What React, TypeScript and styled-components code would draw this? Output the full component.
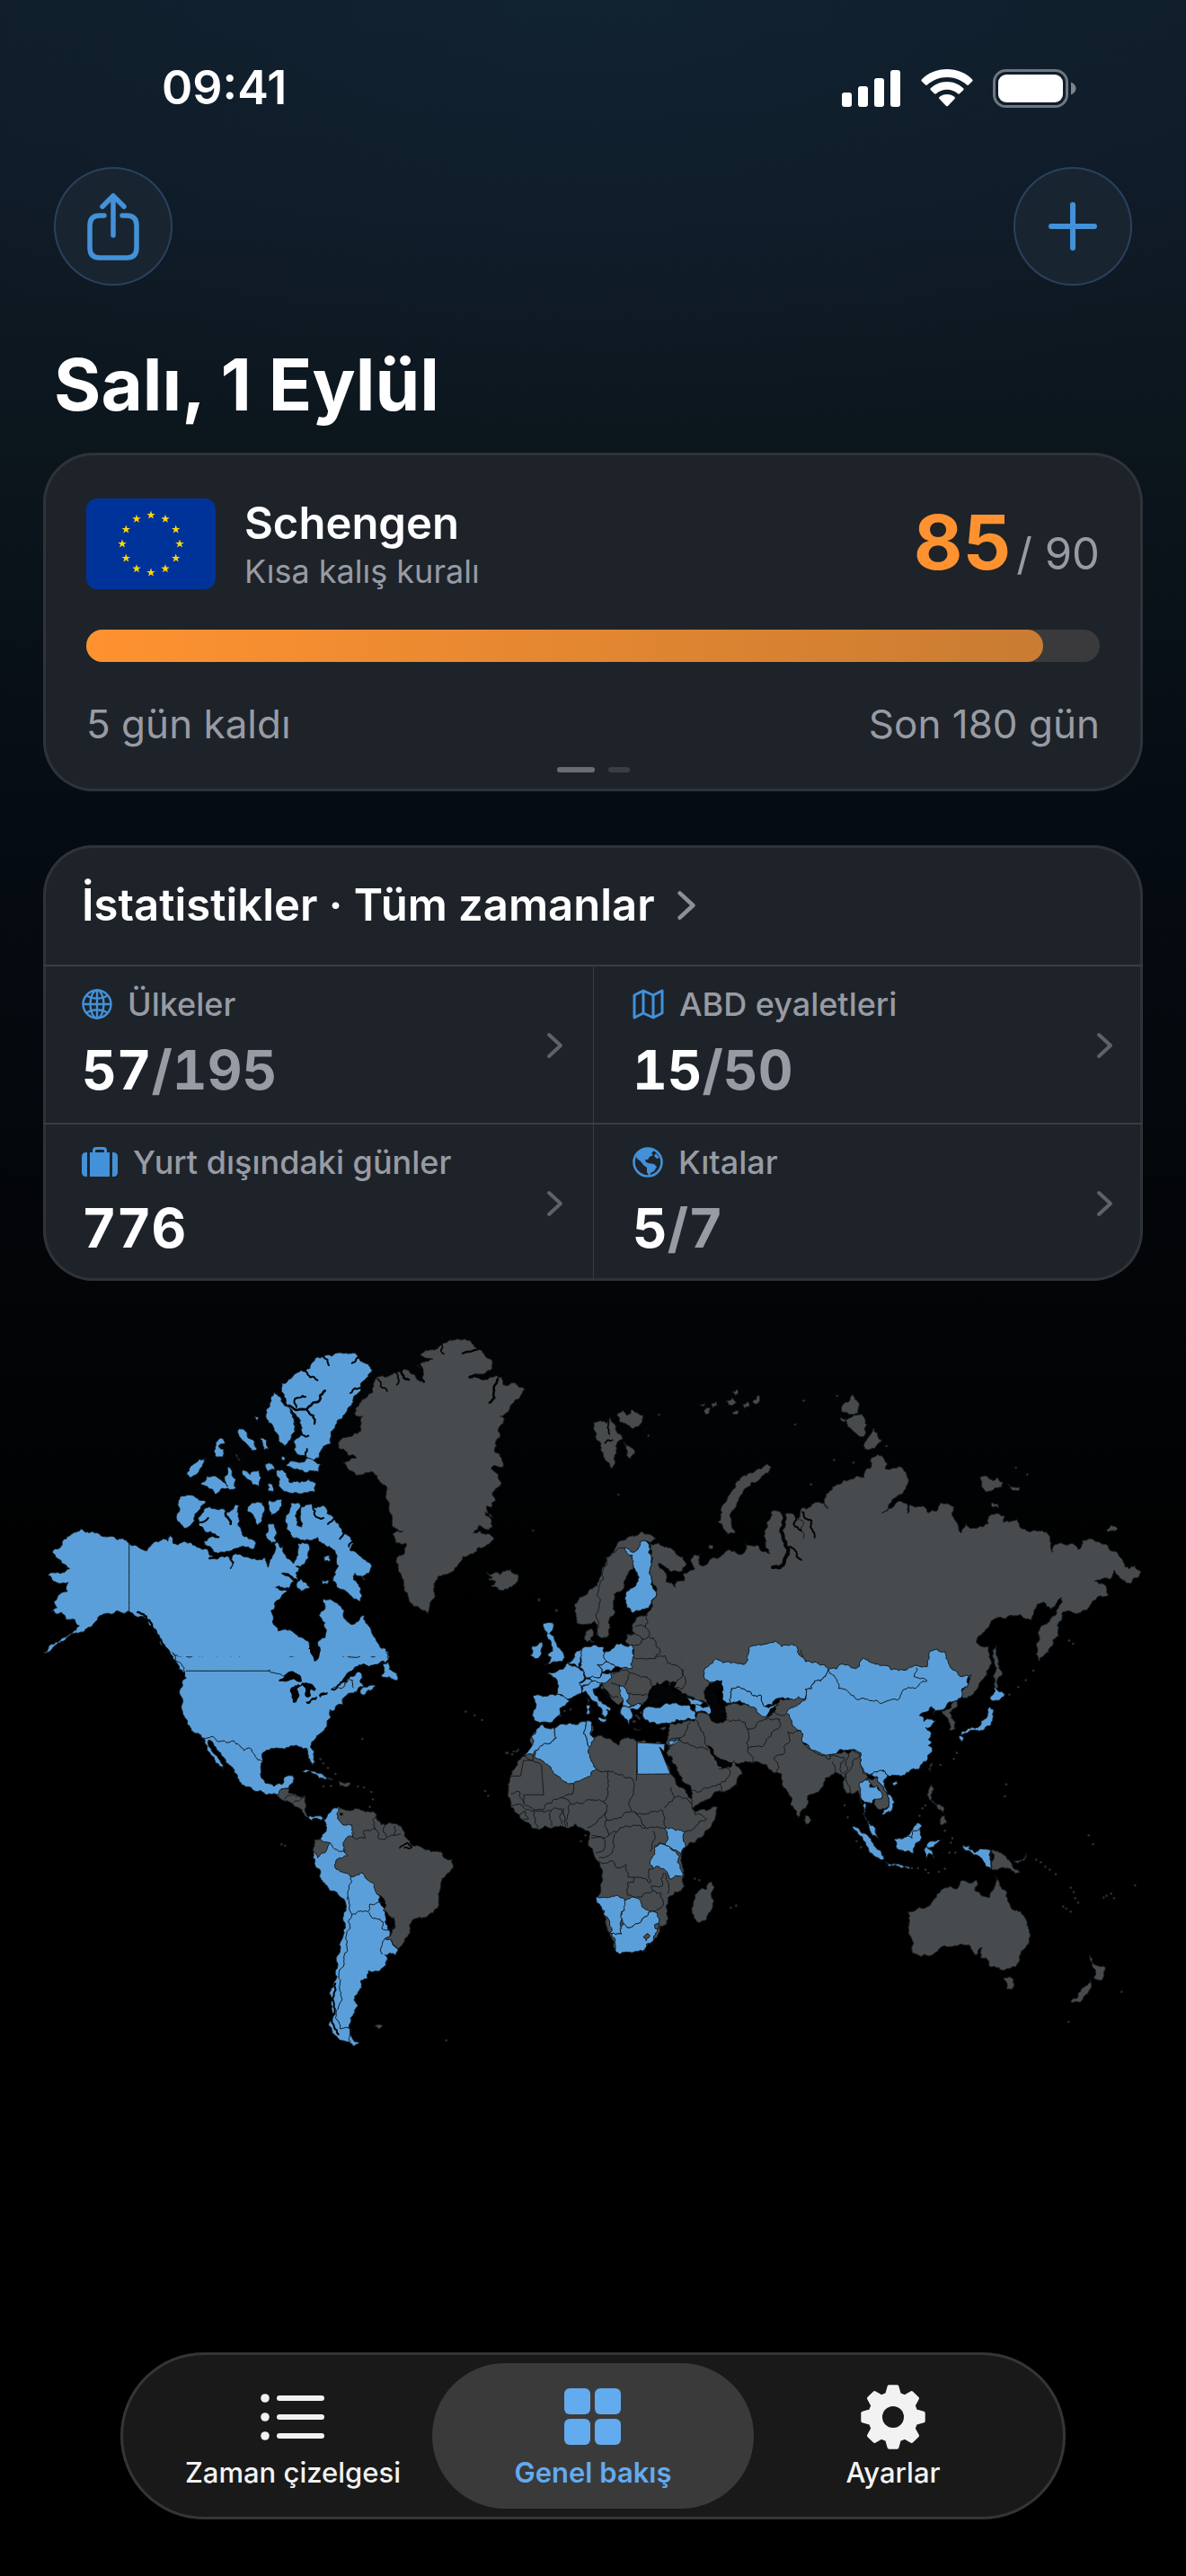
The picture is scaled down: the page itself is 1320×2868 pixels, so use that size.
import React from "react";
import styled, { createGlobalStyle } from "styled-components";

const Global = createGlobalStyle`
  * { box-sizing: border-box; }
  body { margin: 0; background: #000; }
  button { font: inherit; border: 0; padding: 0; background: none; color: inherit; cursor: pointer; }
`;

const accent = "#4391d8";
const muted = "#989ba3";

const Screen = styled.div`
  min-height: 100vh;
  display: flex;
  flex-direction: column;
  font-family: Inter, "Noto Sans", sans-serif;
  color: #fff;
  background:
    radial-gradient(ellipse 900px 500px at 50% 0, rgba(20, 44, 62, 0.35), rgba(20, 44, 62, 0)),
    linear-gradient(180deg, #101d2a 0, #0f1a26 230px, #0c161d 480px, #060c14 900px, #04070a 1300px, #000 1800px);
`;

const StatusBar = styled.div`
  display: flex;
  align-items: center;
  justify-content: space-between;
  padding: 66px 120px 0 180px;
  height: 130px;
`;
const Clock = styled.time`
  font-size: 52px;
  line-height: 64px;
  font-weight: 600;
`;
const StatusIcons = styled.div`
  display: flex;
  align-items: center;
  gap: 22px;
`;

const Toolbar = styled.header`
  display: flex;
  justify-content: space-between;
  padding: 56px 60px 0;
`;
const RoundButton = styled.button`
  width: 132px;
  height: 132px;
  border-radius: 50%;
  display: grid;
  place-items: center;
  background: #182531;
  box-shadow: inset 0 0 0 2px #29415d;
`;

const Main = styled.main`
  padding: 0 48px;
`;
const Title = styled.h1`
  margin: 62px 12px 28px;
  font-size: 80px;
  line-height: 96px;
  font-weight: 700;
`;
const Card = styled.section`
  border-radius: 56px;
  background: #1e232a;
  box-shadow: inset 0 0 0 3px #2f3338;
`;
const RuleCard = styled(Card)`
  padding: 51px 48px 21px;
`;
const RuleHead = styled.div`
  display: flex;
  align-items: flex-start;
  height: 101px;
`;
const Flag = styled.svg`
  width: 144px;
  height: 101px;
  border-radius: 12px;
  display: block;
`;
const RuleText = styled.div`
  flex: 1;
  padding-left: 32px;
`;
const RuleName = styled.h2`
  margin: 0 0 3px;
  font-size: 49px;
  line-height: 56px;
  font-weight: 600;
`;
const RuleNote = styled.p`
  margin: 0;
  font-size: 36px;
  line-height: 44px;
  color: ${muted};
`;
const Count = styled.p`
  margin: 0;
  display: flex;
  align-items: baseline;
  gap: 6px;
  font-size: 49px;
  line-height: 98px;
  color: ${muted};
`;
const CountNow = styled.strong`
  font-size: 84px;
  font-weight: 700;
  color: #ff9230;
`;
const Track = styled.div`
  margin-top: 45px;
  height: 36px;
  border-radius: 18px;
  background: #3a3a3c;
`;
const Fill = styled.div`
  height: 100%;
  border-radius: 18px;
  background: linear-gradient(90deg, #ff9230, #c97c32);
`;
const RuleFoot = styled.div`
  margin-top: 43px;
  display: flex;
  justify-content: space-between;
  font-size: 44px;
  line-height: 52px;
  color: ${muted};
`;
const Pager = styled.div`
  margin-top: 22px;
  display: flex;
  justify-content: center;
  gap: 15px;
`;
const PagerDot = styled.span<{ $on?: boolean }>`
  width: ${(p) => (p.$on ? 42 : 24)}px;
  height: 6px;
  border-radius: 3px;
  background: ${(p) => (p.$on ? "#6a6e73" : "#3a3e42")};
`;

const StatsCard = styled(Card)`
  margin-top: 60px;
  overflow: hidden;
`;
const StatsHead = styled.button`
  width: 100%;
  height: 133px;
  padding: 0 43px;
  display: flex;
  align-items: center;
  gap: 24px;
  font-size: 49px;
  line-height: 60px;
  font-weight: 600;
`;
const StatsGrid = styled.div`
  display: grid;
  grid-template-columns: 1fr 1fr;
`;
const Stat = styled.button`
  height: 176px;
  padding: 20px 33px 0 43px;
  display: flex;
  justify-content: space-between;
  text-align: left;
  border-top: 2px solid #393d42;
  &:nth-child(even) { border-left: 1px solid #393d42; }
`;
const StatBody = styled.span`
  display: flex;
  flex-direction: column;
  gap: 19px;
`;
const StatLabel = styled.span`
  display: flex;
  align-items: center;
  gap: 17px;
  font-size: 36px;
  line-height: 44px;
  font-weight: 500;
  color: ${muted};
`;
const StatValue = styled.span`
  font-size: 60px;
  line-height: 64px;
  font-weight: 700;
  font-variant-numeric: tabular-nums;
`;
const StatTotal = styled.span`
  color: ${muted};
`;
const StatArrow = styled.span`
  display: flex;
  align-items: center;
  padding-bottom: 18px;
`;

const MapFigure = styled.figure`
  margin: 44px 0 0;
`;
const MapSvg = styled.svg`
  display: block;
  width: 100%;
`;

const TabBar = styled.nav`
  margin: auto 134px 63px;
  height: 186px;
  padding: 12px 25px;
  display: flex;
  border-radius: 93px;
  background: #191919;
  box-shadow: inset 0 0 0 3px #353535;
`;
const Tab = styled.button<{ $on?: boolean }>`
  flex: 1;
  margin: 0 ${(p) => (p.$on ? -12 : 0)}px;
  padding: 24px ${(p) => (p.$on ? 12 : 0)}px 0;
  border-radius: 81px;
  display: flex;
  flex-direction: column;
  align-items: center;
  gap: 8px;
  font-size: 31px;
  line-height: 36px;
  font-weight: ${(p) => (p.$on ? 600 : 500)};
  color: ${(p) => (p.$on ? "#62abee" : "#f2f2f2")};
  background: ${(p) => (p.$on ? "#3a3a3a" : "transparent")};
`;

/* ---------- icons ---------- */

const Signal = () => (
  <svg width="66" height="42" viewBox="0 0 66 42" fill="#fff">
    <rect x="0" y="26" width="11" height="16" rx="3" />
    <rect x="18" y="19" width="11" height="23" rx="3" />
    <rect x="36" y="10" width="11" height="32" rx="3" />
    <rect x="54" y="1" width="11" height="41" rx="3" />
  </svg>
);
const Wifi = () => (
  <svg width="58" height="42" viewBox="0 0 58 42" fill="#fff">
    <path d="M29 0C40 0 50 4 57.200 11.500Q58 12.500 57.200 13.400L53 17.600Q52 18.400 51 17.600C45 12 37.500 9 29 9S13 12 7 17.600Q6 18.400 5 17.600L.8 13.400Q0 12.500 .8 11.500C8 4 18 0 29 0Z" />
    <path d="M29 14C36 14 42.500 16.800 47.200 21.200Q48.200 22.200 47.200 23.200L43 27.300Q42 28.200 41 27.300C37.700 24.500 33.500 22.800 29 22.800S20.300 24.500 17 27.300Q16 28.200 15 27.300L10.800 23.200Q9.800 22.200 10.800 21.200C15.500 16.800 22 14 29 14Z" />
    <path d="M29 28C32.200 28 35.200 29.200 37.500 31.100Q38.500 32 37.600 33L30.200 40.700Q29 41.800 27.800 40.700L20.400 33Q19.500 32 20.500 31.100C22.800 29.200 25.800 28 29 28Z" />
  </svg>
);
const Battery = () => (
  <svg width="95" height="43" viewBox="0 0 95 43">
    <rect x="1.500" y="1.500" width="81" height="40" rx="13" fill="none" stroke="#6f777e" strokeWidth="3" />
    <rect x="6" y="6" width="72" height="31" rx="9" fill="#fff" />
    <path d="M87 14.500C90.500 16 92.500 18.500 92.500 21.500S90.500 27 87 28.500Z" fill="#7c848a" />
  </svg>
);
const Share = () => (
  <svg width="60" height="76" viewBox="0 0 60 76" fill="none" stroke={accent} strokeWidth="5.500" strokeLinecap="round" strokeLinejoin="round">
    <path d="M20 26H15Q4 26 4 37V62Q4 73 15 73H45Q56 73 56 62V37Q56 26 45 26H40" />
    <path d="M30 48V5M18 16L30 4L42 16" />
  </svg>
);
const Plus = () => (
  <svg width="56" height="56" viewBox="0 0 56 56" fill="none" stroke={accent} strokeWidth="6" strokeLinecap="round">
    <path d="M28 4V52M4 28H52" />
  </svg>
);
const Chevron = ({ big }: { big?: boolean }) => (
  <svg width={big ? 22 : 19} height={big ? 34 : 30} viewBox="0 0 19 30" fill="none" stroke={big ? "#8d9096" : "#5f6268"} strokeWidth="4" strokeLinecap="round" strokeLinejoin="round">
    <path d="M3 3L16 15L3 27" />
  </svg>
);
const GlobeIcon = () => (
  <svg width="34" height="34" viewBox="0 0 34 34" fill="none" stroke={accent} strokeWidth="2.400">
    <circle cx="17" cy="17" r="15.500" />
    <ellipse cx="17" cy="17" rx="7.500" ry="15.500" />
    <path d="M17 1.500V32.500M1.500 17H32.500M5 7.500Q17 14 29 7.500M5 26.500Q17 20 29 26.500" />
  </svg>
);
const MapIcon = () => (
  <svg width="35" height="34" viewBox="0 0 35 34" fill="none" stroke={accent} strokeWidth="3" strokeLinejoin="round">
    <path d="M2 7L12 2L23 7L33 2V27L23 32L12 27L2 32ZM12 2V27M23 7V32" />
  </svg>
);
const SuitcaseIcon = () => (
  <svg width="40" height="34" viewBox="0 0 40 34" fill={accent}>
    <path d="M6 6V33H5Q0 33 0 28V11Q0 6 5 6ZM34 6V33H35Q40 33 40 28V11Q40 6 35 6Z" />
    <path d="M9 6H12V4Q12 0 16 0H24Q28 0 28 4V6H31V33H9ZM15 6H25V4.500Q25 3 23.500 3H16.500Q15 3 15 4.500Z" />
  </svg>
);
const AmericasIcon = () => (
  <svg width="34" height="34" viewBox="0 0 34 34">
    <circle cx="17" cy="17" r="15.500" fill="none" stroke={accent} strokeWidth="2.600" />
    <path fill={accent} d="M4 10C7 4 13 1 19 2L24 4L21 7L23 9L19 11L17 14L14 14L15 17L18 18L24 19L27 22L24 27L20 29L19 33L16 28L16 23L12 20L9 16L5 13Z" />
    <path fill={accent} d="M26 7L30 12L27 13L24 10Z" />
  </svg>
);
const ListIcon = () => (
  <svg width="72" height="72" viewBox="0 0 72 72" fill="#f2f2f2">
    {[15, 36, 57].map((y) => (
      <g key={y}>
        <circle cx="5" cy={y} r="4.800" />
        <rect x="18" y={y - 3} width="53" height="6" rx="3" />
      </g>
    ))}
  </svg>
);
const GridIcon = () => (
  <svg width="72" height="72" viewBox="0 0 72 72" fill="#62abee">
    {[4, 38].map((y) => [4, 38].map((x) => <rect key={`${x}-${y}`} x={x} y={y} width="29" height="29" rx="6" />))}
  </svg>
);
const gearPath = (() => {
  const pts: string[] = [];
  for (let i = 0; i < 8; i++) {
    const base = (i * Math.PI) / 4;
    const steps: [number, number][] = [[-0.27, 26], [-0.13, 34], [0.13, 34], [0.27, 26]];
    for (const [da, r] of steps) {
      pts.push(`${(36 + r * Math.sin(base + da)).toFixed(2)},${(36 - r * Math.cos(base + da)).toFixed(2)}`);
    }
  }
  return `M${pts.join("L")}Z`;
})();
const GearIcon = () => (
  <svg width="72" height="72" viewBox="0 0 72 72">
    <path d={gearPath} fill="#f2f2f2" stroke="#f2f2f2" strokeWidth="4" strokeLinejoin="round" />
    <circle cx="36" cy="36" r="12" fill="#191919" />
  </svg>
);

const EuFlag = () => {
  const star = (cx: number, cy: number) =>
    Array.from({ length: 10 }, (_, i) => {
      const r = i % 2 ? 2 : 5;
      const a = (i * Math.PI) / 5;
      return `${cx + r * Math.sin(a)},${cy - r * Math.cos(a)}`;
    }).join(" ");
  return (
    <Flag viewBox="0 0 144 101" role="img" aria-label="AB">
      <rect width="144" height="101" fill="#003399" />
      {Array.from({ length: 12 }, (_, i) => {
        const a = (i * Math.PI) / 6;
        return <polygon key={i} fill="#ffd60a" points={star(72 + 32 * Math.sin(a), 50.500 - 32 * Math.cos(a))} />;
      })}
    </Flag>
  );
};

/* ---------- world map ---------- */

type Sheet = keyof typeof sheets;
type Pt = [number, number];

// Each sheet is a survey tile: its origin on the map, drawn at three times scale.
const sheets = {
  arctic: [40, 1470],
  greenland: [360, 1470],
  eurasia: [560, 1680],
  siberia: [860, 1520],
  americas: [160, 1840],
  africa: [540, 1880],
  pacific: [880, 1880],
  barents: [740, 1520],
} as const;

const parse = (sheet: Sheet, s: string): Pt[] =>
  s.trim().split(/\s+/).map((p) => {
    const [x, y] = p.split(",").map(Number);
    return [sheets[sheet][0] + x / 3, sheets[sheet][1] + y / 3] as Pt;
  });

const noise = (a: Pt, b: Pt) => {
  const v = Math.sin(a[0] * 12.9898 + a[1] * 78.233 + b[0] * 37.719 + b[1] * 11.131) * 43758.5453;
  return (v - Math.floor(v)) * 2 - 1;
};

// Midpoint displacement; neighbours that share an edge get the same crinkles.
const crinkle = (a: Pt, b: Pt, k: number): Pt[] => {
  const len = Math.hypot(b[0] - a[0], b[1] - a[1]);
  if (len < 3) return [b];
  const [p, q] = a[0] < b[0] || (a[0] === b[0] && a[1] < b[1]) ? [a, b] : [b, a];
  const n = noise(p, q) * k * Math.min(len, 14);
  const m: Pt = [
    (p[0] + q[0]) / 2 + ((p[1] - q[1]) / len) * n,
    (p[1] + q[1]) / 2 + ((q[0] - p[0]) / len) * n,
  ];
  return [...crinkle(a, m, k), ...crinkle(m, b, k)];
};

const toPath = (pts: Pt[], close: boolean, k: number) => {
  const out: Pt[] = [pts[0]];
  for (let i = 1; i < pts.length; i++) out.push(...crinkle(pts[i - 1], pts[i], k));
  if (close) out.push(...crinkle(pts[pts.length - 1], pts[0], k));
  return `M${out.map((p) => `${p[0].toFixed(1)},${p[1].toFixed(1)}`).join("L")}${close ? "Z" : ""}`;
};

const visited = "#5a9fda";
const unvisited = "#484b4d";
const sea = "#020405";
const edge = "#141a1e";

type Shape = [Sheet, string, string];

const lands: Shape[] = [
  // Canada and Alaska
  ["arctic", visited, "152,697 165,708 190,705 215,718 245,722 270,733 290,728 312,745 335,752 355,765 370,770 385,750 410,740 425,728 440,738 447,718 458,745 475,750 490,740 515,742 535,755 555,765 575,768 580,785 600,797 620,788 640,788 650,830 655,788 680,780 700,790 730,795 755,800 765,792 775,825 780,800 797,775 795,745 805,740 818,760 825,755 835,785 850,800 860,812 870,790 875,745 905,745 915,765 910,795 895,815 868,822 880,830 868,845 875,868 860,862 850,852 820,845 850,860 862,872 845,895 800,892 840,902 825,915 800,940 785,970 790,1005 800,1020 808,1037 840,1035 870,1050 900,1068 912,1075 915,1110 930,1140 945,1130 948,1100 940,1078 965,1060 970,1035 965,1010 945,985 958,970 960,930 990,935 1010,950 1030,970 1035,1000 1060,1015 1080,1000 1095,985 1110,1020 1125,1050 1140,1075 1165,1095 1178,1110 1180,1125 1150,1140 980,1170 500,1180 470,1145 450,1115 430,1090 410,1050 395,1030 375,1000 345,990 312,972 290,978 270,970 245,980 220,985 200,1005 180,1025 140,1045 100,1065 60,1090 25,1110 80,1070 120,1045 145,1020 130,1000 100,1000 85,975 50,970 70,960 60,940 85,910 105,905 108,875 60,872 40,852 75,842 112,830 85,810 55,775 80,760 90,735 120,712"],
  ["arctic", visited, "820,210 850,195 885,165 915,160 940,122 975,115 1010,108 1035,108 1075,125 1110,145 1123,165 1110,190 1085,225 1060,262 1040,300 1020,330 1000,350 985,380 985,410 955,430 945,460 920,470 900,455 880,450 862,430 860,405 880,390 885,350 870,320 855,300 835,270 820,240"],
  ["arctic", visited, "795,240 815,255 830,285 850,300 862,330 865,370 850,400 830,420 810,400 795,370 790,350 770,330 768,300 780,280 785,255"],
  ["arctic", visited, "850,470 880,475 905,460 930,470 952,480 945,505 915,502 880,500 850,490 835,485"],
  ["arctic", visited, "805,500 825,500 840,525 845,540 880,542 910,530 935,545 930,575 890,578 855,578 830,572 812,545"],
  ["arctic", visited, "675,365 695,365 705,385 730,405 738,430 720,435 705,415 685,395"],
  ["arctic", visited, "748,395 770,400 778,430 760,432"],
  ["arctic", visited, "600,410 625,395 632,410 610,420 628,432 625,455 600,455 595,435"],
  ["arctic", visited, "500,515 520,485 545,462 568,460 555,490 535,515 515,525"],
  ["arctic", visited, "550,545 570,520 600,520 625,540 640,555 632,520 640,490 655,510 668,530 668,560 640,560 600,582 590,565"],
  ["arctic", visited, "690,500 715,515 745,500 752,525 745,555 725,550 705,530"],
  ["arctic", visited, "765,480 790,480 798,500 775,505"],
  ["arctic", visited, "775,545 790,550 792,572 775,570"],
  ["arctic", visited, "820,455 832,460 830,468 820,465"],
  ["arctic", visited, "730,320 742,322 738,335"],
  ["arctic", visited, "668,445 682,470 672,460"],
  ["arctic", visited, "480,590 510,583 540,595 568,605 550,630 530,655 520,680 498,695 480,675 470,665 478,640"],
  ["arctic", visited, "540,660 560,640 580,622 600,630 640,640 665,615 680,620 678,660 685,700 710,730 735,745 725,765 690,755 660,765 630,775 590,765 560,740 575,728 605,725 600,715 565,708 545,690"],
  ["arctic", visited, "705,635 730,610 755,608 762,640 755,670 740,685 730,660"],
  ["arctic", visited, "780,600 822,600 815,625 800,645 785,650 778,625"],
  ["arctic", visited, "775,680 795,680 805,710 800,742 785,745 768,712"],
  ["arctic", visited, "850,612 880,610 870,640 872,685 888,690 882,655 885,625 920,612 925,625 960,618 972,645 995,665 1020,695 1045,720 1060,745 1050,770 1080,785 1100,800 1122,822 1110,845 1090,855 1100,868 1065,845 1060,865 1085,895 1082,940 1060,930 1035,905 1010,895 990,870 1000,850 1010,820 1005,790 980,755 955,745 940,725 915,735 880,730 850,715 838,700 835,650"],
  ["arctic", visited, "870,880 885,862 905,880 918,892 885,905"],
  ["arctic", visited, "962,790 982,782 982,805 965,806"],
  ["arctic", visited, "955,865 980,870 975,880 956,880"],
  ["arctic", visited, "1160,1145 1178,1140 1180,1165 1205,1180 1208,1202 1180,1190 1152,1188"],
  // United States and Mexico
  ["americas", visited, "95,0 815,0 818,22 808,34 770,44 735,42 705,48 690,62 672,80 655,104 690,78 715,64 728,72 722,95 735,112 715,122 700,135 690,135 668,150 666,175 640,182 632,195 622,190 625,215 612,245 600,262 575,285 560,300 560,320 568,345 572,365 565,375 555,360 548,340 545,320 520,315 500,312 470,322 455,320 430,320 405,330 395,345 392,370 392,400 405,435 435,447 460,440 468,418 500,412 500,430 485,452 460,455 458,468 450,482 435,470 405,474 370,462 340,448 318,430 310,405 285,375 260,345 240,315 225,295 217,292 225,320 245,345 265,375 268,390 255,380 235,350 215,330 205,305 195,285 165,265 155,250 145,225 130,205 125,180 127,150 122,120 128,95 142,85 135,50 110,30"],
  ["americas", visited, "722,130 740,115 765,108 775,112 750,125 728,140"],
  ["americas", unvisited, "450,482 462,455 485,450 485,470 540,480 538,520 552,550 538,545 520,520 490,500"],
  ["americas", visited, "548,548 580,545 602,552 592,560 575,553 560,560"],
  ["americas", visited, "530,398 560,396 600,408 632,422 605,424 570,406"],
  ["americas", unvisited, "650,430 690,435 680,447 655,445"],
  // South America
  ["americas", visited, "590,620 605,600 600,560 620,535 650,515 700,560 850,990 840,1012 805,1010 810,1045 790,1062 750,1062 748,1088 725,1095 728,1120 702,1160 715,1180 690,1220 685,1250 695,1285 720,1303 700,1315 650,1290 625,1230 635,1100 642,1020 660,960 672,830 620,795 590,730 565,685"],
  ["americas", unvisited, "650,520 700,525 765,530 780,560 810,575 860,580 870,610 890,640 935,655 985,665 1030,690 1032,720 992,770 985,830 965,870 895,900 890,935 850,990 805,955 840,915 835,885 800,862 800,820 775,800 770,775 725,735 690,747 670,735 638,715 645,690 680,678 675,620 695,615 695,575 655,562 645,540"],
  ["americas", unvisited, "570,625 590,620 622,635 610,660 580,685 567,665"],
  ["americas", unvisited, "770,1248 798,1246 785,1258"],
  // Greenland, Iceland, Svalbard
  ["greenland", unvisited, "430,67 470,62 490,68 525,95 530,105 540,120 565,140 565,160 545,170 520,180 490,185 545,195 560,190 595,190 600,215 620,215 640,207 672,228 655,260 630,280 620,300 590,320 605,330 600,345 585,360 578,400 572,440 595,460 600,490 570,485 560,495 585,515 595,545 580,560 565,575 575,600 560,625 545,620 565,660 540,640 540,650 565,690 550,700 520,685 500,710 540,715 568,725 545,750 500,780 465,790 450,815 430,840 400,850 375,870 368,905 355,945 348,980 325,965 300,955 285,930 270,895 262,860 250,830 248,790 270,780 275,745 240,740 230,715 265,705 232,690 228,650 220,610 210,580 205,550 180,520 150,508 110,518 85,500 65,475 110,460 80,450 55,430 52,405 80,390 125,370 130,320 105,315 110,290 140,260 165,240 170,205 195,185 240,175 280,165 325,205 335,180 310,150 330,140 365,130 325,120 340,100 380,95 405,75"],
  ["greenland", unvisited, "545,840 560,850 575,840 590,850 600,838 625,832 648,848 650,870 630,890 600,903 575,890 560,888 575,872 548,865 565,858"],
  ["greenland", unvisited, "903,340 925,335 945,345 960,325 975,365 1000,395 980,410 972,450 962,495 940,465 925,420 910,395 903,365"],
  ["greenland", unvisited, "980,318 1000,300 1015,318 1030,298 1068,318 1060,345 1035,362 1015,350 990,340"],
  ["greenland", unvisited, "1003,405 1020,420 1040,445 1025,462 1012,450"],
  // Britain and Ireland
  ["greenland", visited, "695,1090 715,1085 728,1074 727,1100 724,1122 705,1130 690,1120 700,1105"],
  ["greenland", visited, "735,1012 765,1010 768,1025 755,1045 770,1055 780,1085 803,1115 800,1138 770,1140 740,1150 760,1125 748,1115 765,1105 760,1080 748,1060 738,1035"],
  // Siberia and the Arctic islands
  ["siberia", unvisited, "35,520 50,500 80,515 95,480 115,480 130,465 165,460 185,480 178,440 200,405 235,385 280,370 305,375 310,350 325,345 325,320 350,297 370,310 385,330 375,345 405,343 435,345 450,375 445,405 415,440 365,493 400,475 430,455 450,465 450,495 458,465 500,470 515,490 550,485 560,460 605,475 605,510 630,560 645,530 680,545 700,540 720,530 720,505 740,498 775,505 770,525 815,515 830,545 855,555 900,552 925,570 930,595 935,625 945,598 1000,595 1020,615 1035,595 1035,585 1090,590 1130,620 1170,655 1190,680 1210,670 1230,690 1215,710 1195,730 1150,700 1140,685 1125,715 1075,722 1110,735 1120,770 1095,770 1060,800 1030,825 1000,825 965,830 950,870 955,905 930,940 905,970 888,988 882,940 885,895 915,865 945,835 965,775 930,815 905,790 875,815 865,850 830,835 780,845 745,845 715,880 680,925 720,940 728,985 715,1035 680,1085 645,1112 630,1105 660,1045 0,1045 -20,900 0,700"],
  ["siberia", unvisited, "735,950 748,935 755,990 768,1030 752,1045 750,1080 742,1075 742,1000"],
  ["siberia", unvisited, "265,95 288,125 285,160 255,165 230,155 240,125"],
  ["siberia", unvisited, "245,185 285,165 310,185 305,238 275,225 250,205"],
  ["siberia", unvisited, "225,175 245,178 238,190"],
  ["siberia", unvisited, "335,210 350,225 365,250 345,270 308,280 320,240"],
  ["siberia", unvisited, "692,375 715,370 735,385 750,375 768,390 765,408 725,420 697,405"],
  ["siberia", unvisited, "785,398 825,408 818,420 795,412"],
  ["siberia", unvisited, "730,460 750,462 755,475 735,475"],
  ["siberia", unvisited, "1115,550 1130,535 1153,547 1120,557"],
  ["barents", unvisited, "340,330 355,340 345,360 320,378 290,390 265,415 250,440 240,465 222,490 222,530 235,560 210,565 195,545 178,525 190,490 205,455 220,425 235,395 260,370 300,355"],
  ["barents", unvisited, "155,130 172,120 175,135 160,142"],
  ["barents", unvisited, "205,120 225,108 238,125 225,135"],
  ["barents", unvisited, "225,90 240,80 245,92 235,100"],
  ["barents", unvisited, "258,130 278,122 282,138 265,145"],
  ["barents", unvisited, "292,122 312,100 318,118 300,130"],
  ["barents", unvisited, "130,152 152,143 148,160 140,165"],
  ["barents", unvisited, "115,135 135,128 130,138"],
  ["barents", unvisited, "225,158 245,150 240,165 228,165"],
  ["barents", unvisited, "146,602 160,602 158,614 148,614"],
  ["barents", unvisited, "458,116 470,118 462,122"],
  // Scandinavia
  ["eurasia", unvisited, "245,380 248,310 270,290 300,265 320,240 330,200 345,160 375,130 400,105 430,90 460,75 490,85 510,100 495,112 470,105 455,140 440,160 432,150 435,200 412,225 405,255 370,285 368,320 375,345 358,360 358,395 350,425 328,432 312,420 305,375 280,385 258,385"],
  ["eurasia", unvisited, "275,410 295,400 300,425 290,440 305,445 280,445 272,425"],
  // European Russia
  ["eurasia", unvisited, "485,115 520,115 560,130 600,160 612,185 590,210 560,210 520,182 545,215 545,245 575,262 580,240 605,240 600,220 625,205 640,200 635,155 660,150 655,185 680,185 710,165 740,145 800,150 810,115 850,120 890,150 875,100 878,65 893,30 895,10 912,5 945,15 1000,40 1000,500 1085,540 1050,560 690,580 675,600 680,640 700,690 665,640 620,625 580,600 555,590 600,535 545,515 500,430 475,425 475,385 478,355 495,330 512,290 498,240 490,200 495,160"],
  ["eurasia", unvisited, "445,362 478,355 560,450 600,540 600,600 575,598 540,575 515,585 490,605 478,640 465,655 430,660 400,640 388,655 345,605 325,600 335,580 365,545 430,500 430,455 408,445 412,420 440,415 430,390"],
  // Middle East, Central Asia, India
  ["eurasia", unvisited, "555,715 640,707 650,680 685,685 692,700 720,715 745,705 740,660 780,650 860,660 885,695 925,635 1010,635 1010,680 1000,780 1095,820 1180,805 1200,830 1195,870 1215,895 1190,925 1175,950 1150,950 1140,900 1110,880 1075,900 1060,935 1015,960 1010,1000 985,1033 960,990 935,930 930,885 900,880 880,855 840,845 780,850 770,845 800,885 780,920 730,945 635,1000 630,960 590,890 545,815 555,800 550,760 555,740"],
  // Africa
  ["africa", unvisited, "190,120 230,132 268,120 335,108 355,115 352,160 400,165 445,190 460,168 505,178 560,183 603,185 598,205 582,195 625,290 655,330 690,385 700,410 775,395 770,425 730,490 670,530 655,565 660,600 665,660 610,710 605,750 612,770 585,795 575,830 530,875 450,888 435,870 415,815 375,695 390,630 380,580 345,525 350,485 330,470 300,452 270,465 230,462 170,467 120,435 85,395 78,340 85,290 110,240 150,205 160,150"],
  ["africa", visited, "190,120 230,132 238,165 210,185 165,210 160,222 130,222 150,200 155,160"],
  ["africa", visited, "230,132 268,120 335,110 328,150 350,195 352,235 370,268 330,300 295,318 165,228 165,208 210,185 238,165"],
  ["africa", visited, "335,110 350,108 355,125 350,150 365,165 350,195 328,150"],
  ["africa", visited, "612,175 650,165 640,180 615,202"],
  ["africa", visited, "600,465 670,478 668,530 655,558 600,522 608,490"],
  ["africa", visited, "565,530 600,522 648,558 650,600 660,625 615,635 600,605 560,600 553,570"],
  ["africa", visited, "372,695 465,702 465,740 455,745 455,820 418,815 400,760"],
  ["africa", visited, "465,705 512,702 548,745 520,780 475,798 458,780 458,745 465,740"],
  ["africa", visited, "418,815 455,820 460,785 475,798 520,780 548,745 575,750 578,800 560,845 530,875 450,888 435,868"],
  ["africa", unvisited, "528,830 540,818 550,828 538,842"],
  ["africa", unvisited, "565,790 578,785 578,800 568,802"],
  ["africa", unvisited, "755,645 765,665 740,770 715,782 697,765 700,690 740,670"],
  // Europe
  ["eurasia", visited, "408,128 425,142 450,135 460,108 475,105 488,120 485,145 495,170 490,200 498,240 500,265 512,288 495,315 470,335 432,347 412,330 410,290 425,265 450,235 448,215 435,195 432,155 412,145"],
  ["eurasia", visited, "285,460 300,455 335,460 340,480 345,510 315,520 330,545 325,562 275,565 270,545 255,530 258,490 265,465"],
  ["eurasia", visited, "340,475 380,450 430,455 432,500 430,535 390,530 375,528 345,510"],
  ["eurasia", visited, "315,520 345,510 375,528 360,542 330,545"],
  ["eurasia", visited, "275,570 325,562 330,548 360,545 362,565 350,575 310,578"],
  ["eurasia", visited, "148,550 175,545 200,535 215,515 250,530 270,545 272,565 255,580 262,600 262,615 240,625 215,635 178,620 185,590 175,565"],
  ["eurasia", visited, "215,512 235,500 245,475 262,470 258,505 252,530"],
  ["eurasia", visited, "255,580 275,567 308,578 280,588 262,592"],
  ["eurasia", visited, "100,625 175,622 222,640 190,665 185,690 165,712 130,712 103,705"],
  ["eurasia", visited, "262,592 290,580 330,580 320,595 300,602 315,625 360,665 355,675 345,670 350,685 340,698 330,670 290,630 275,608 262,612"],
  ["eurasia", visited, "315,698 345,700 340,712"],
  ["eurasia", visited, "278,655 290,655 288,685 278,685"],
  ["eurasia", visited, "280,632 288,638 284,650"],
  ["eurasia", visited, "388,590 410,600 420,620 412,640 428,655 400,658 392,625"],
  ["eurasia", visited, "398,660 440,655 462,650 455,665 425,668 430,700 420,720 405,700 392,672"],
  ["eurasia", visited, "468,670 490,660 540,650 590,655 620,655 640,675 640,705 560,715 520,720 490,715 470,700"],
  ["eurasia", visited, "612,628 668,645 660,655 625,652"],
  ["eurasia", visited, "640,655 690,655 695,670 685,690 665,675 645,680"],
  ["eurasia", unvisited, "435,732 462,735 440,739"],
  ["eurasia", unvisited, "522,735 545,728 535,739"],
  // Central and East Asia
  ["eurasia", visited, "675,530 710,500 760,515 810,515 820,465 860,455 910,440 930,460 975,455 1010,510 1050,515 1085,540 1060,575 1040,575 1030,600 1010,602 1008,635 920,632 900,655 875,660 860,622 815,610 790,595 762,600 762,650 735,640 735,605 690,580 670,555"],
  ["eurasia", visited, "762,600 790,595 815,610 860,622 875,660 920,655 890,675 880,700 820,655 790,640 762,650"],
  ["pacific", visited, "125,-60 100,-25 80,-25 70,0 50,2 45,40 -15,80 5,120 40,150 40,180 90,212 130,220 210,203 237,222 237,262 262,288 290,278 310,272 325,290 360,290 430,268 455,240 473,208 470,195 460,190 472,180 460,170 468,160 450,130 485,108 470,102 445,110 445,97 430,90 460,75 470,60 480,68 475,88 505,72 570,30 572,0 590,-5 605,-45 570,-40 530,-80 515,-125 490,-132 465,-125 455,-72 420,-78 360,-60 275,-85 240,-102 230,-75 175,-82"],
  ["pacific", unvisited, "505,75 555,40 550,65 530,80 550,110 550,135 530,138 525,100 515,90"],
  ["pacific", visited, "680,-5 690,5 715,20 695,40 675,42 665,30 678,15"],
  ["pacific", visited, "665,60 678,70 675,100 665,125 640,140 620,140 580,150 565,158 570,145 610,130 630,125 655,95"],
  ["pacific", visited, "565,155 578,165 570,178 562,165"],
  ["pacific", unvisited, "465,255 475,250 468,278 460,270"],
  ["pacific", visited, "340,315 355,308 358,318 345,325"],
  ["pacific", unvisited, "180,285 205,205 237,222 237,262 258,295 232,315 238,350 240,385 232,370 225,340 200,350 190,320"],
  ["pacific", unvisited, "255,300 290,295 305,325 328,365 328,395 300,405 278,385 280,370 305,365 290,330"],
  ["pacific", visited, "265,288 300,272 325,290 312,305 315,330 340,365 342,395 315,420 303,420 310,405 328,395 328,365 305,325 290,295"],
  ["pacific", visited, "230,315 262,305 265,330 290,325 305,350 303,368 275,372 270,385 250,378 240,390 248,425 265,445 258,450 240,420 243,375 232,345"],
  ["pacific", visited, "255,450 280,462 290,500 270,485"],
  ["pacific", visited, "205,462 230,470 270,510 300,540 312,570 290,565 250,520"],
  ["pacific", visited, "315,578 360,585 400,598 370,600 325,592"],
  ["pacific", visited, "345,505 365,500 400,480 420,450 438,458 432,475 430,510 410,550 380,545 355,535"],
  ["pacific", visited, "455,530 470,530 500,508 465,510 455,520 450,550 455,570 462,550 480,568 470,540"],
  ["pacific", visited, "575,522 600,525 595,535 615,548 635,535 668,540 668,602 650,590 640,570 610,555 575,530"],
  ["pacific", unvisited, "670,540 710,555 735,580 765,615 750,618 725,600 690,605 670,602"],
  ["pacific", unvisited, "745,575 785,560 788,550 780,575 750,580"],
  ["pacific", unvisited, "460,340 470,320 478,335 470,375 482,385 462,370"],
  ["pacific", unvisited, "500,435 515,425 520,450 500,455"],
  ["pacific", unvisited, "480,385 512,395 510,415 490,400"],
  ["pacific", unvisited, "48,425 60,425 65,445 52,453"],
  // Oceania
  ["pacific", unvisited, "392,745 430,730 470,715 490,685 515,665 550,670 565,645 620,640 625,655 615,675 665,697 678,670 685,628 700,660 718,675 725,710 755,740 790,780 797,815 785,865 765,905 750,930 715,940 695,932 665,930 652,900 635,900 640,865 618,890 600,860 565,853 520,862 490,878 430,893 408,885 410,850 395,790"],
  ["pacific", unvisited, "710,970 745,972 735,1005 722,1003"],
  ["pacific", unvisited, "998,890 1022,925 1050,930 1030,975 1010,965 1018,940"],
  ["pacific", unvisited, "1000,970 1005,990 970,1045 935,1045 970,1005"],
];

// Egypt keeps its ruled borders.
const ruledLand: Shape = ["africa", visited, "507,180 600,185 598,210 582,195 618,285 508,286"];

// Joins between tiles, filled without an outline.
const joins: Shape[] = [
  ["arctic", visited, "462,1098 915,1098 915,1122 475,1122"],
  ["arctic", visited, "948,1098 1164,1098 1172,1122 948,1122"],
  ["eurasia", unvisited, "984,100 1018,100 1018,495 984,460"],
  ["eurasia", unvisited, "486,345 575,440 615,545 590,528 548,508 530,478 512,430 484,415 480,372"],
];

const waters: [Sheet, string][] = [
  ["arctic", "915,1090 917,1112 930,1140 943,1130 948,1090"],
  ["americas", "450,95 470,75 490,62 510,68 525,80 528,97 500,88 480,95"],
  ["americas", "495,115 515,105 530,108 512,125 510,165 500,168 494,145"],
  ["americas", "530,100 555,103 575,120 570,128 560,122 558,145 545,150 540,120 525,108"],
  ["americas", "540,165 560,152 580,148 575,158 550,172"],
  ["americas", "585,142 600,133 615,132 612,140 590,150"],
  ["americas", "655,535 665,535 662,545 655,542"],
  ["eurasia", "478,648 490,605 515,575 530,590 555,597 590,610 615,640 615,652 540,643 500,655"],
  ["eurasia", "548,595 560,578 585,570 575,592 555,602"],
  ["eurasia", "670,605 700,580 732,572 735,600 705,605 715,640 740,665 742,705 715,712 692,700 690,665 680,640"],
  ["eurasia", "680,790 700,800 720,830 775,840 765,855 745,865 720,860 700,825"],
];

const channels: [Sheet, number, string][] = [
  ["arctic", 8, "965,235 945,270 905,297 870,300 845,285"],
  ["arctic", 7, "905,300 930,345"],
  ["arctic", 6, "900,255 865,262 870,290"],
  ["arctic", 6, "1088,228 1050,243"],
  ["arctic", 6, "900,170 940,200"],
  ["arctic", 6, "960,118 978,150"],
  ["arctic", 6, "1085,125 1055,143"],
  ["arctic", 6, "910,385 880,370 862,345"],
  ["arctic", 6, "905,430 900,455"],
  ["arctic", 8, "638,622 650,680"],
  ["arctic", 7, "540,685 570,718 610,724"],
  ["arctic", 6, "575,660 548,675"],
  ["arctic", 6, "925,625 930,650 960,660"],
  ["arctic", 6, "1000,660 975,680"],
  ["arctic", 6, "1025,705 1015,730"],
  ["arctic", 6, "1060,740 1045,755"],
  ["arctic", 7, "340,975 370,1000 400,1050 430,1090 460,1140 495,1180"],
  ["arctic", 7, "580,795 620,785 665,765 720,775 770,790"],
  ["greenland", 7, "528,97 465,110"],
  ["greenland", 8, "582,195 570,235 555,275"],
  ["greenland", 9, "555,183 488,190"],
  ["greenland", 8, "310,145 335,205"],
  ["greenland", 8, "262,165 285,198"],
  ["greenland", 5, "243,170 245,215"],
  ["greenland", 5, "180,195 212,237"],
  ["greenland", 5, "395,80 402,112"],
  ["greenland", 5, "950,335 955,380"],
  ["greenland", 5, "940,410 965,400"],
  ["americas", 6, "800,30 760,44 710,52 680,78 650,108 628,122"],
  ["eurasia", 12, "938,0 935,60 942,120 945,160 925,195 900,195"],
  ["eurasia", 6, "948,130 970,132 980,160 995,170"],
  ["eurasia", 6, "975,20 970,50 995,72"],
  ["eurasia", 6, "1000,10 1030,40 1040,95"],
  ["americas", 5, "855,652 880,635 895,650 870,652"],
  ["americas", 6, "640,1105 632,1160 628,1220 650,1275"],
  ["pacific", 3, "565,158 600,150 610,140"],
];

const borders: [Sheet, string][] = [
  ["americas", "420,56 420,62 445,70 470,78"],
  ["americas", "630,120 660,120 685,87 697,92 700,118"],
  ["americas", "195,285 215,284 250,297 285,300 300,294 320,310 335,327 350,318 365,335 380,358 395,362"],
  ["americas", "470,490 500,475 540,480"],
  ["americas", "500,500 538,482"],
  ["americas", "622,635 645,658 675,660"],
  ["americas", "690,747 685,780 678,825"],
  ["americas", "678,815 695,875 690,920 675,950 678,1000 665,1050 655,1110 662,1160 640,1220 655,1255 690,1255 690,1300"],
  ["americas", "695,875 715,865 750,865 755,840 800,835"],
  ["americas", "752,868 800,900 795,922 830,920 840,910"],
  ["americas", "805,955 795,980 797,1008"],
  ["americas", "695,600 710,625 740,620 735,595 775,590 765,560 778,548"],
  ["americas", "775,590 785,622 840,610 858,605"],
  ["americas", "805,575 800,600 810,615"],
  ["americas", "838,578 835,610"],
  ["eurasia", "315,420 315,370 320,330 315,290 320,260 335,235 335,200 345,165 365,150 405,130"],
  ["eurasia", "440,390 475,395"],
  ["eurasia", "476,358 475,395 485,425 502,432"],
  ["eurasia", "412,420 440,418 465,435 485,425"],
  ["eurasia", "430,455 450,455 465,435"],
  ["eurasia", "432,495 470,500 505,500 525,480 500,430"],
  ["eurasia", "505,500 540,490 550,515 600,540 598,560 580,572"],
  ["eurasia", "425,548 445,555 480,560 495,590"],
  ["eurasia", "365,550 395,538 425,548 405,590"],
  ["eurasia", "360,580 390,588"],
  ["eurasia", "415,615 450,620 478,615"],
  ["eurasia", "335,590 350,620 385,630"],
  ["eurasia", "545,805 590,770 640,795 685,808"],
  ["eurasia", "555,770 590,765 615,735 625,710"],
  ["eurasia", "645,705 660,740 675,770 682,795"],
  ["eurasia", "632,940 690,930 725,920 755,890 758,875 720,868"],
  ["eurasia", "725,920 735,945"],
  ["eurasia", "745,705 790,705 815,735 812,780 835,830 830,848"],
  ["eurasia", "815,735 860,708 885,698 925,705"],
  ["eurasia", "820,800 870,790 895,755 918,735 920,700"],
  ["eurasia", "905,885 920,865 905,830 935,820 955,780 950,745 995,742"],
  ["eurasia", "885,695 900,680 945,685"],
  ["eurasia", "1010,792 1050,820 1092,835 1092,818"],
  ["eurasia", "1092,825 1140,832 1125,850 1135,885"],
  ["eurasia", "1100,845 1105,880"],
  ["eurasia", "1195,815 1165,860 1140,900"],
  ["siberia", "185,1020 215,1050 220,1080 250,1088 275,1112 330,1120 362,1130 415,1118 435,1085 515,1055 500,1045 472,1040 480,1010"],
  ["pacific", "365,500 405,500 410,475 430,470"],
  ["africa", "188,255 130,225"],
  ["africa", "295,318 292,352 262,362 205,385 195,405 165,405 130,385 128,355"],
  ["africa", "85,350 115,345 130,385"],
  ["africa", "85,390 125,390 165,408 168,440 175,467"],
  ["africa", "115,425 135,410 145,435 125,440"],
  ["africa", "168,408 222,408 222,460"],
  ["africa", "222,405 255,402 258,455"],
  ["africa", "262,400 268,460"],
  ["africa", "275,460 285,385 255,362"],
  ["africa", "285,385 330,380 395,378 410,330 410,275 370,268"],
  ["africa", "395,378 405,412 370,450 340,465"],
  ["africa", "410,275 440,285 495,308"],
  ["africa", "495,308 495,350 480,380 490,410 440,435 405,440"],
  ["africa", "490,410 505,420 555,410 590,405 600,430 605,465"],
  ["africa", "500,410 535,465 600,470"],
  ["africa", "405,412 400,460 415,490 355,492"],
  ["africa", "415,485 440,478 450,465 535,465"],
  ["africa", "620,330 630,365 600,400"],
  ["africa", "630,365 665,365 690,390"],
  ["africa", "690,400 700,420 740,435 700,465 670,478"],
  ["africa", "440,478 430,530 405,560 380,565"],
  ["africa", "355,500 395,500 395,540 370,550"],
  ["africa", "560,475 568,500 552,545"],
  ["africa", "600,520 565,525"],
  ["africa", "380,575 420,575 435,595 470,588 478,630 495,630 495,648 475,648 475,690"],
  ["africa", "495,630 550,650 545,605 560,600"],
  ["africa", "475,690 500,698 560,675 555,660 590,660 595,615"],
  ["africa", "560,675 588,685 585,735 550,748"],
  ["africa", "600,615 612,660 610,685"],
];

const ruled: [Sheet, string][] = [
  ["arctic", "311,745 311,970"],
  ["arctic", "500,1171 780,1171"],
  ["africa", "507,180 505,308"],
  ["africa", "85,292 118,292 128,240 160,240 160,222"],
  ["africa", "188,255 195,355 130,355"],
  ["pacific", "669,540 669,602"],
];

// Small archipelagos, as centre points.
const islets: [Sheet, string][] = [
  ["americas", "590,355 600,370 615,385 640,405 600,447 625,445 715,447 735,450 760,465 765,490 755,515 460,640 472,645 1075,197 1105,210 1130,225 1140,462 1150,478 1010,1295 730,288"],
  ["greenland", "700,702 720,932 778,968 985,582 1120,315 1085,385"],
  ["eurasia", "120,305 178,340 190,690 205,675 225,670 445,690 455,700 440,710 460,680 15,815 45,810 30,820"],
  ["siberia", "215,102 75,198 205,317 270,325 128,398 380,270 812,342 850,365 990,920 1003,930 870,1020 845,1052 820,1075 790,1100"],
  ["pacific", "405,600 425,600 450,605 460,615 495,612 515,602 530,548 550,548 540,500 535,515 515,475 440,400 430,425 450,390 180,390 190,430 220,510 235,530 820,572 835,580 850,595 865,605 885,620 935,665 945,680 950,700 960,715 910,728 920,735 935,745 1045,698 1055,692 1070,685 1080,700 1150,657 995,490 1010,520 720,320 715,360 545,235 555,215 500,255 1105,1013 928,1113"],
  ["africa", "335,490 320,510 700,635 715,640 820,732 838,725 510,95 495,110 70,215 95,210 110,205"],
];

const WorldMap = () => (
  <MapSvg viewBox="48 1470 1224 830" role="img" aria-label="Dünya haritası">
    <g stroke={edge} strokeWidth="1" strokeLinejoin="round">
      {lands.map(([s, fill, pts], i) => (
        <path key={i} fill={fill} d={toPath(parse(s, pts), true, 0.22)} />
      ))}
      <path fill={ruledLand[1]} d={toPath(parse(ruledLand[0], ruledLand[2]), true, 0)} />
    </g>
    {joins.map(([s, fill, pts], i) => (
      <path key={i} fill={fill} d={toPath(parse(s, pts), true, 0)} />
    ))}
    <g fill={sea}>
      {waters.map(([s, pts], i) => (
        <path key={i} d={toPath(parse(s, pts), true, 0.22)} />
      ))}
    </g>
    <g fill="none" stroke={sea} strokeLinecap="round" strokeLinejoin="round">
      {channels.map(([s, w, pts], i) => (
        <path key={i} strokeWidth={w / 3} d={toPath(parse(s, pts), false, 0.24)} />
      ))}
    </g>
    <g fill="none" stroke={edge} strokeWidth="1">
      {borders.map(([s, pts], i) => (
        <path key={i} d={toPath(parse(s, pts), false, 0.22)} />
      ))}
      {ruled.map(([s, pts], i) => (
        <path key={i} d={toPath(parse(s, pts), false, 0)} />
      ))}
    </g>
    <g fill="#2c2f31">
      {islets.flatMap(([s, pts]) => parse(s, pts).map(([x, y]) => <circle key={`${x}-${y}`} cx={x} cy={y} r="1.300" />))}
    </g>
  </MapSvg>
);

/* ---------- page ---------- */

const stats = [
  { label: "Ülkeler", value: "57", total: "/195", Icon: GlobeIcon },
  { label: "ABD eyaletleri", value: "15", total: "/50", Icon: MapIcon },
  { label: "Yurt dışındaki günler", value: "776", total: "", Icon: SuitcaseIcon },
  { label: "Kıtalar", value: "5", total: "/7", Icon: AmericasIcon },
];

const tabs = [
  { label: "Zaman çizelgesi", Icon: ListIcon },
  { label: "Genel bakış", Icon: GridIcon, on: true },
  { label: "Ayarlar", Icon: GearIcon },
];

export default function App() {
  const used = 85;
  const limit = 90;
  return (
    <>
      <Global />
      <Screen>
        <StatusBar>
          <Clock>09:41</Clock>
          <StatusIcons>
            <Signal />
            <Wifi />
            <Battery />
          </StatusIcons>
        </StatusBar>
        <Toolbar>
          <RoundButton aria-label="Paylaş"><Share /></RoundButton>
          <RoundButton aria-label="Ekle"><Plus /></RoundButton>
        </Toolbar>
        <Main>
          <Title>Salı, 1 Eylül</Title>
          <RuleCard>
            <RuleHead>
              <EuFlag />
              <RuleText>
                <RuleName>Schengen</RuleName>
                <RuleNote>Kısa kalış kuralı</RuleNote>
              </RuleText>
              <Count>
                <CountNow>{used}</CountNow>
                <span>/ {limit}</span>
              </Count>
            </RuleHead>
            <Track role="progressbar" aria-label="Schengen" aria-valuenow={used} aria-valuemax={limit}>
              <Fill style={{ width: `${(used / limit) * 100}%` }} />
            </Track>
            <RuleFoot>
              <span>5 gün kaldı</span>
              <span>Son 180 gün</span>
            </RuleFoot>
            <Pager>
              <PagerDot $on />
              <PagerDot />
            </Pager>
          </RuleCard>
          <StatsCard>
            <StatsHead>
              İstatistikler · Tüm zamanlar
              <Chevron big />
            </StatsHead>
            <StatsGrid>
              {stats.map(({ label, value, total, Icon }) => (
                <Stat key={label}>
                  <StatBody>
                    <StatLabel><Icon />{label}</StatLabel>
                    <StatValue>{value}<StatTotal>{total}</StatTotal></StatValue>
                  </StatBody>
                  <StatArrow><Chevron /></StatArrow>
                </Stat>
              ))}
            </StatsGrid>
          </StatsCard>
          <MapFigure><WorldMap /></MapFigure>
        </Main>
        <TabBar>
          {tabs.map(({ label, Icon, on }) => (
            <Tab key={label} $on={on}>
              <Icon />
              {label}
            </Tab>
          ))}
        </TabBar>
      </Screen>
    </>
  );
}
